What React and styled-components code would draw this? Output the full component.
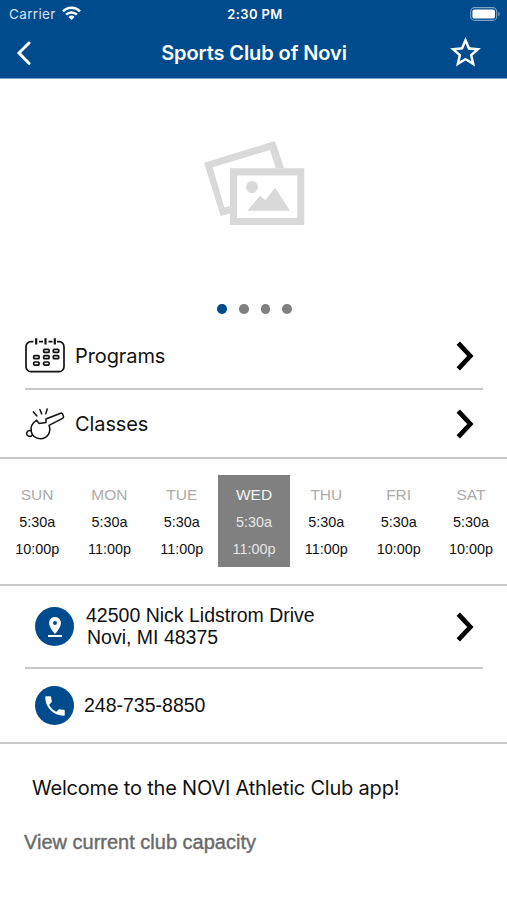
import React from "react";
import styled, { createGlobalStyle } from "styled-components";
import { MdStarBorder, MdPinDrop, MdPhone } from "react-icons/md";

const BLUE = "#004b8d";
const SANS = '"Inter", "Liberation Sans", sans-serif';
const HELV = '"Liberation Sans", Arial, sans-serif';

const GlobalStyle = createGlobalStyle`
  * { box-sizing: border-box; }
  body { margin: 0; background: #fff; }
  svg { display: block; flex: none; }
`;

const Screen = styled.main`
  width: 507px;
  height: 900px;
  overflow: hidden;
  display: flex;
  flex-direction: column;
  background: #fff;
  color: #111;
  font-family: ${SANS};
`;

const Header = styled.header`
  flex: none;
  height: 79px;
  background: ${BLUE};
  border-bottom: 1px solid #6fa3cf;
  color: #fff;
`;

const StatusBar = styled.div`
  height: 27px;
  display: grid;
  grid-template-columns: 1fr auto 1fr;
  align-items: center;
  padding: 0 6px 0 9px;
`;

const Carrier = styled.div`
  display: flex;
  align-items: center;
  gap: 6px;
  font-size: 13.5px;
  letter-spacing: 0.35px;
  color: #d5e3ef;
`;

const Clock = styled.div`
  font-size: 13px;
  font-weight: 600;
  letter-spacing: 0.4px;
`;

const Battery = styled.div`
  justify-self: end;
`;

const NavBar = styled.div`
  height: 51px;
  display: grid;
  grid-template-columns: 60px 1fr 60px;
  align-items: center;
  padding: 0 0 0 1px;
`;

const IconButton = styled.button`
  border: 0;
  background: none;
  color: inherit;
  display: flex;
  padding: 0 0 0 ${(p) => p.$inset}px;
`;

const Title = styled.h1`
  margin: 0;
  text-align: center;
  white-space: nowrap;
  font-size: 20px;
  font-weight: 600;
  letter-spacing: -0.1px;
`;

const Carousel = styled.section`
  flex: none;
  height: 245px;
  display: flex;
  flex-direction: column;
  align-items: center;
  justify-content: space-between;
  padding: 57px 0 10px 1px;
`;

const Dots = styled.div`
  display: flex;
  gap: 12px;
  padding-left: 1px;
`;

const Dot = styled.span`
  width: 9.6px;
  height: 9.6px;
  border-radius: 50%;
  background: ${(p) => (p.$active ? BLUE : "#808080")};
`;

const Section = styled.section`
  flex: none;
  border-bottom: 2px solid #c8c8c8;
`;

const Row = styled.div`
  height: ${(p) => p.$height}px;
  margin: 0 24px 0 25px;
  display: flex;
  align-items: center;
  padding: 0 9px 0 ${(p) => p.$inset || 0}px;
  border-bottom: ${(p) => (p.$divided ? "2px solid #c8c8c8" : "0")};
`;

const RowLabel = styled.div`
  flex: 1;
  margin-left: 9px;
  font-size: 20px;
  letter-spacing: ${(p) => p.$tracking}px;
`;

const Badge = styled.div`
  flex: none;
  width: 39px;
  height: 39px;
  border-radius: 50%;
  background: ${BLUE};
  color: #fff;
  display: flex;
  align-items: center;
  justify-content: center;
`;

const Address = styled.address`
  flex: 1;
  margin-left: 12px;
  font: normal 19.5px/21.5px ${HELV};
`;

const AddressLine = styled.div`
  letter-spacing: ${(p) => p.$tracking}px;
  padding-left: ${(p) => p.$inset || 0}px;
`;

const Phone = styled.div`
  margin-left: 10px;
  font: 19.5px ${HELV};
`;

const Hours = styled.div`
  height: 125px;
  display: grid;
  grid-template-columns: repeat(7, 72.3px);
  padding: 16px 0 17px 1px;
`;

const Day = styled.div`
  display: flex;
  flex-direction: column;
  align-items: center;
  padding-top: 6px;
  font: 14.4px/27px ${HELV};
  background: ${(p) => (p.$today ? "#808080" : "transparent")};
  color: ${(p) => (p.$today ? "#e6e6e6" : "#111")};
`;

const DayName = styled.div`
  font-size: 15.5px;
  line-height: 28px;
  color: ${(p) => (p.$today ? "#f4f4f4" : "#ababab")};
`;

const Welcome = styled.p`
  margin: 31px 0 0 32px;
  font-size: 20px;
  line-height: 26px;
  letter-spacing: -0.2px;
`;

const CapacityLink = styled.a`
  margin: 28px 0 0 24px;
  font: 20px/26px ${HELV};
  color: #6a6a6a;
  -webkit-text-stroke: 0.4px #6a6a6a;
`;

const WifiIcon = () => (
  <svg width="19" height="15" viewBox="0 0 19 15" fill="none" stroke="#fff" strokeWidth="2.5">
    <path d="M1 5.3C5.7.7 13.3.7 18 5.3" />
    <path d="M4.1 8.6c3-2.9 7.8-2.9 10.8 0" />
    <path d="M9.5 14 6.5 11a4.3 4.3 0 0 1 6 0Z" fill="#fff" stroke="none" />
  </svg>
);

const BatteryIcon = () => (
  <svg width="31" height="14" viewBox="0 0 31 14">
    <rect x=".7" y=".6" width="26" height="12.8" rx="4" fill="none" stroke="#7fa5c6" strokeWidth="1.1" />
    <rect x="2.4" y="2.4" width="22.6" height="9.2" rx="2.2" fill="#fff" />
    <path d="M28.3 4.8c2 .8 2 3.6 0 4.4Z" fill="#7fa5c6" />
  </svg>
);

const BackIcon = () => (
  <svg width="16" height="24" viewBox="0 0 16 24" fill="none" stroke="#fff" strokeWidth="3" strokeLinecap="round">
    <path d="M13 2 3 12l10 10.3" />
  </svg>
);

const Chevron = () => (
  <svg width="18" height="30" viewBox="0 0 18 30" fill="none" stroke="#000" strokeWidth="4.7">
    <path d="M2.3 2.2 14.3 15 2.3 27.8" />
  </svg>
);

const PicturesIcon = () => (
  <svg width="108" height="94" viewBox="0 0 108 94" fill="#d9d9d9">
    <path d="M4 26.7 75 5l9 27.3h-8.3L70 14 12.7 31.3l11.6 40L30 70v7.5L20.7 80Z" />
    <path fillRule="evenodd" d="M30 32.3h74.3V89H30ZM37 39.5V82h60.3V39.5Z" />
    <circle cx="52" cy="51" r="6" />
    <path d="M47.3 74.7 60 59.7l5.3 4.6L75 51.7l15 23Z" />
  </svg>
);

const CELLS = [
  [21.7, 14], [31.3, 14],
  [11.7, 20.3], [21.7, 20.3], [31.3, 20.3],
  [11.7, 26.7], [21.7, 26.7],
];

const CalendarIcon = () => (
  <svg width="41" height="38" viewBox="0 0 41 38" fill="none" stroke="#111" strokeWidth="1.7">
    <path d="M8.4 4.7H6a5 5 0 0 0-5 5v20a5 5 0 0 0 5 5h28a5 5 0 0 0 5-5v-20a5 5 0 0 0-5-5h-2" />
    <path d="M14 4.7h4M23.5 4.7h4" />
    <path d="M11.2 1.2v6.4M20.5 1.2v6.4M29.8 1.2v6.4" strokeWidth="2.2" />
    {CELLS.map(([x, y]) => (
      <rect key={`${x}-${y}`} x={x - 3} y={y - 1.7} width="5.4" height="3.1" rx="1" />
    ))}
  </svg>
);

const WhistleIcon = () => (
  <svg width="41" height="36" viewBox="1 0 41 36" fill="none" stroke="#111" strokeWidth="1.5" strokeLinejoin="round" strokeLinecap="round">
    <path d="M12.7 14.2 15 17.4l7-1V13L36.6 7.2q1.6-.5 2.1 1l.8 2.2q.4 1.4-1 2L25 19.3c2.6 7-1.6 13.3-8.7 13.4-9.800 0-13-12.500-3.600-18.500Z" />
    <path d="M6.800 24.800a2.900 2.900 0 1 0 1.200 4.400" />
    <path d="m9.400 5.900 3.500 4M15.900 3.500l1.800 4.400M23.200 3l-1.400 4.900" />
  </svg>
);

const WEEK = [
  ["SUN", "5:30a", "10:00p"],
  ["MON", "5:30a", "11:00p"],
  ["TUE", "5:30a", "11:00p"],
  ["WED", "5:30a", "11:00p"],
  ["THU", "5:30a", "11:00p"],
  ["FRI", "5:30a", "10:00p"],
  ["SAT", "5:30a", "10:00p"],
];

export default function App() {
  return (
    <>
      <GlobalStyle />
      <Screen>
        <Header>
          <StatusBar>
            <Carrier>
              Carrier <WifiIcon />
            </Carrier>
            <Clock>2:30 PM</Clock>
            <Battery>
              <BatteryIcon />
            </Battery>
          </StatusBar>
          <NavBar>
            <IconButton $inset={15} aria-label="Back">
              <BackIcon />
            </IconButton>
            <Title>Sports Club of Novi</Title>
            <IconButton $inset={0} aria-label="Favorite">
              <MdStarBorder size={37} />
            </IconButton>
          </NavBar>
        </Header>

        <Carousel>
          <PicturesIcon />
          <Dots>
            {[0, 1, 2, 3].map((i) => (
              <Dot key={i} $active={i === 0} />
            ))}
          </Dots>
        </Carousel>

        <Section>
          <Row $height={66} $divided>
            <CalendarIcon />
            <RowLabel $tracking={-0.1}>Programs</RowLabel>
            <Chevron />
          </Row>
          <Row $height={67}>
            <WhistleIcon />
            <RowLabel $tracking={-0.1}>Classes</RowLabel>
            <Chevron />
          </Row>
        </Section>

        <Section>
          <Hours>
            {WEEK.map(([name, open, close]) => {
              const today = name === "WED";
              return (
                <Day key={name} $today={today}>
                  <DayName $today={today}>{name}</DayName>
                  <div>{open}</div>
                  <div>{close}</div>
                </Day>
              );
            })}
          </Hours>
        </Section>

        <Section>
          <Row $height={83} $inset={10} $divided>
            <Badge>
              <MdPinDrop size={24} />
            </Badge>
            <Address>
              <AddressLine>42500 Nick Lidstrom Drive</AddressLine>
              <AddressLine $inset={1}>Novi, MI 48375</AddressLine>
            </Address>
            <Chevron />
          </Row>
          <Row $height={73} $inset={10}>
            <Badge>
              <MdPhone size={26} />
            </Badge>
            <Phone>248-735-8850</Phone>
          </Row>
        </Section>

        <Welcome>Welcome to the NOVI Athletic Club app!</Welcome>
        <CapacityLink>View current club capacity</CapacityLink>
      </Screen>
    </>
  );
}
